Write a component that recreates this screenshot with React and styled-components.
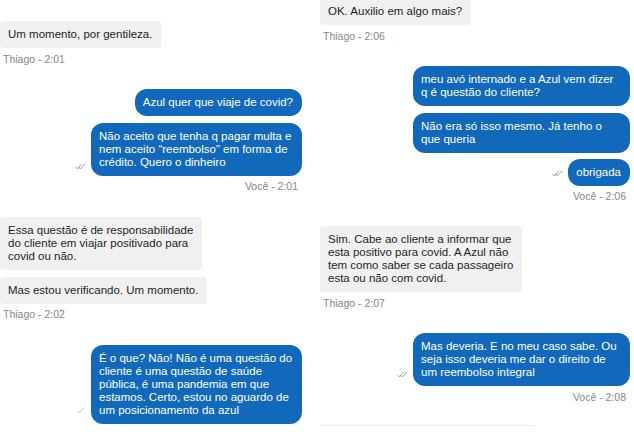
import styled, { createGlobalStyle } from 'styled-components';

const Global = createGlobalStyle`
    html, body {
        margin: 0;
        padding: 0;
        background: #fff;
    }
    body {
        font-family: "Liberation Sans", Arial, sans-serif;
        -webkit-font-smoothing: antialiased;
    }
`

const Page = styled.div`
    display: grid;
    grid-template-columns: 302px 310px;
    column-gap: 18px;
    width: 634px;
    height: 432px;
    overflow: hidden;
    background: #fff;
`

const Column = styled.div`
    display: flex;
    flex-direction: column;
    align-items: stretch;
`

const Bubble = styled.div`
    box-sizing: border-box;
    width: ${p => (p.$w ? `${p.$w}px` : 'auto')};
    padding: 7px 9px 7px 8px;
    font-size: 11.5px;
    line-height: 13px;
    white-space: nowrap;
    background: ${p => (p.$out ? '#1269bc' : '#f0f0f0')};
    color: ${p => (p.$out ? '#fff' : '#1f1f1f')};
    border-radius: ${p => (p.$out ? '12px' : '4px')};
`

const InRow = styled.div`
    display: flex;
    justify-content: flex-start;
    margin-top: ${p => p.$gap || 0}px;
`

const OutRow = styled.div`
    display: flex;
    justify-content: flex-end;
    align-items: flex-end;
    gap: 5px;
    margin-top: ${p => p.$gap || 0}px;
`

const Tick = styled.svg`
    flex: none;
    margin-bottom: ${p => p.$lift || 6}px;
`

const Meta = styled.div`
    margin-top: ${p => p.$gap || 0}px;
    padding: ${p => (p.$right ? '0 4px 0 0' : '0 0 0 3px')};
    font-size: 10.5px;
    line-height: 12px;
    color: #868686;
    text-align: ${p => (p.$right ? 'right' : 'left')};
`

const Divider = styled.div`
    margin-top: ${p => p.$gap || 0}px;
    width: 215px;
    height: 1px;
    background: #ececec;
`

function Lines({ lines }) {
    return lines.map((l, i) => (
        <div key={i}>{l}</div>
    ))
}

function Check({ double, lift }) {
    return (
        <Tick $lift={lift} width="11" height="7" viewBox="0 0 11 7" fill="none" stroke="#9a9a9a" strokeWidth="0.9" strokeLinecap="round">
            {double && <path d="M0.8 4.2 L2.4 6 L6.6 1" />}
            <path d={double ? 'M3.8 4.2 L5.4 6 L9.8 1' : 'M2.5 4 L4.3 6 L8.8 1'} stroke={double ? '#9a9a9a' : '#c4c4c4'} />
        </Tick>
    )
}

function Incoming({ lines, gap }) {
    return (
        <InRow $gap={gap}>
            <Bubble><Lines lines={lines} /></Bubble>
        </InRow>
    )
}

function Outgoing({ lines, gap, w, check, lift }) {
    return (
        <OutRow $gap={gap}>
            {check && <Check double={check === 'double'} lift={lift} />}
            <Bubble $out $w={w}><Lines lines={lines} /></Bubble>
        </OutRow>
    )
}

export default function App() {
    return (
        <Page>
            <Global />
            <Column>
                <Incoming gap={21} lines={['Um momento, por gentileza.']} />
                <Meta $gap={5}>Thiago - 2:01</Meta>
                <Outgoing gap={24} lines={['Azul quer que viaje de covid?']} />
                <Outgoing
                    gap={7}
                    w={211}
                    check="double"
                    lines={['Não aceito que tenha q pagar multa e', 'nem aceito “reembolso” em forma de', 'crédito. Quero o dinheiro']}
                />
                <Meta $gap={4} $right>Você - 2:01</Meta>
                <Incoming
                    gap={25}
                    lines={['Essa questão é de responsabilidade', 'do cliente em viajar positivado para', 'covid ou não.']}
                />
                <Incoming gap={7} lines={['Mas estou verificando. Um momento.']} />
                <Meta $gap={4}>Thiago - 2:02</Meta>
                <Outgoing
                    gap={25}
                    w={211}
                    check="single"
                    lift={10}
                    lines={[
                        'É o que? Não! Não é uma questão do',
                        'cliente é uma questão de saúde',
                        'pública, é uma pandemia em que',
                        'estamos. Certo, estou no aguardo de',
                        'um posicionamento da azul',
                    ]}
                />
            </Column>
            <Column>
                <Incoming gap={-2} lines={['OK. Auxilio em algo mais?']} />
                <Meta $gap={5}>Thiago - 2:06</Meta>
                <Outgoing
                    gap={24}
                    w={217}
                    lines={['meu avó internado e a Azul vem dizer', 'q é questão do cliente?']}
                />
                <Outgoing
                    gap={7}
                    w={217}
                    lines={['Não era só isso mesmo. Já tenho o', 'que queria']}
                />
                <Outgoing gap={6} check="double" lift={9} lines={['obrigada']} />
                <Meta $gap={4} $right>Você - 2:06</Meta>
                <Incoming
                    gap={24}
                    lines={[
                        'Sim. Cabe ao cliente a informar que',
                        'esta positivo para covid. A Azul não',
                        'tem como saber se cada passageiro',
                        'esta ou não com covid.',
                    ]}
                />
                <Meta $gap={5}>Thiago - 2:07</Meta>
                <Outgoing
                    gap={24}
                    w={217}
                    check="double"
                    lift={8}
                    lines={['Mas deveria. E no meu caso sabe. Ou', 'seja isso deveria me dar o direito de', 'um reembolso integral']}
                />
                <Meta $gap={5} $right>Você - 2:08</Meta>
                <Divider $gap={22} />
            </Column>
        </Page>
    )
}
